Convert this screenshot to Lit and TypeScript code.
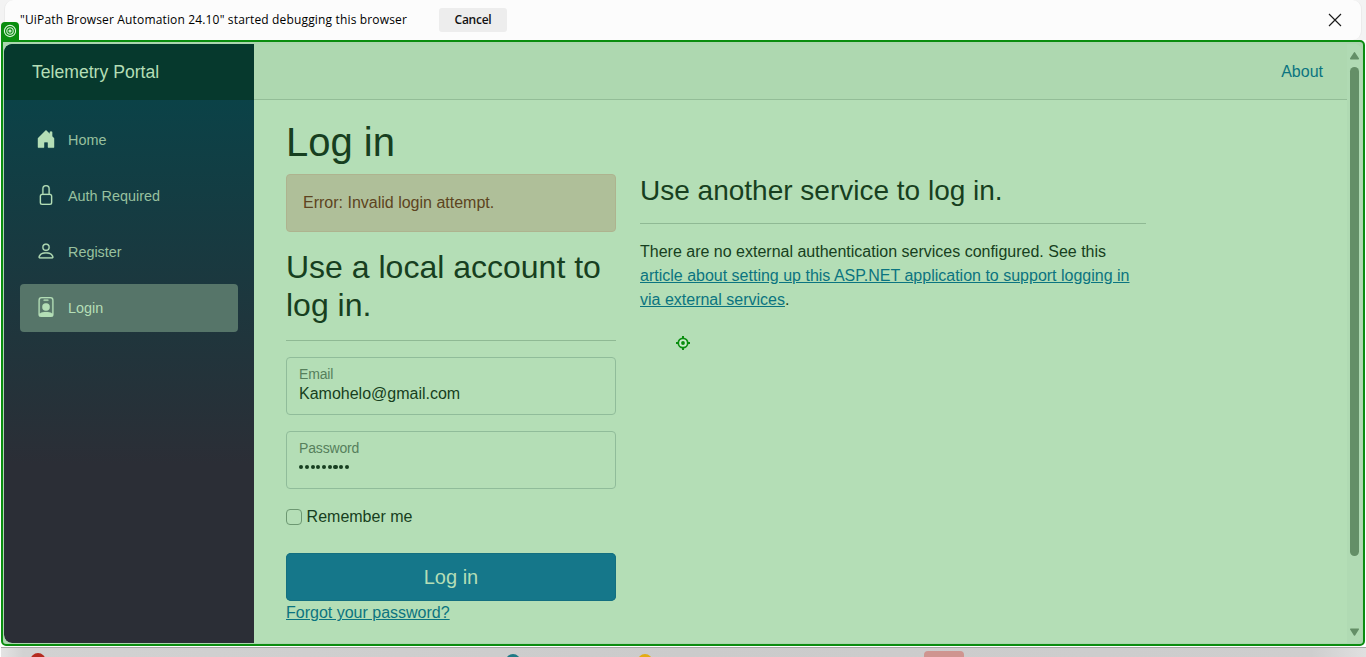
import { LitElement, html, css, svg } from "lit";
import { customElement } from "lit/decorators.js";

const ICONS = {
  home: svg`<path d="M6.5 14.5v-3.505c0-.245.25-.495.5-.495h2c.25 0 .5.25.5.5v3.5a.5.5 0 0 0 .5.5h4a.5.5 0 0 0 .5-.5v-7a.5.5 0 0 0-.146-.354L13 5.793V2.5a.5.5 0 0 0-.5-.5h-1a.5.5 0 0 0-.5.5v1.293L8.354 1.146a.5.5 0 0 0-.708 0l-6 6A.5.5 0 0 0 1.5 7.5v7a.5.5 0 0 0 .5.5h4a.5.5 0 0 0 .5-.5"/>`,
  lock: svg`<path d="M8 1a2 2 0 0 1 2 2v4H6V3a2 2 0 0 1 2-2m3 6V3a3 3 0 0 0-6 0v4a2 2 0 0 0-2 2v5a2 2 0 0 0 2 2h6a2 2 0 0 0 2-2V9a2 2 0 0 0-2-2M5 8h6a1 1 0 0 1 1 1v5a1 1 0 0 1-1 1H5a1 1 0 0 1-1-1V9a1 1 0 0 1 1-1"/>`,
  person: svg`<path d="M8 8a3 3 0 1 0 0-6 3 3 0 0 0 0 6m2-3a2 2 0 1 1-4 0 2 2 0 0 1 4 0m4 8c0 1-1 1-1 1H3s-1 0-1-1 1-4 6-4 6 3 6 4m-1-.004c-.001-.246-.154-.986-.832-1.664C11.516 10.68 10.289 10 8 10s-3.516.68-4.168 1.332c-.678.678-.83 1.418-.832 1.664z"/>`,
  badge: svg`<path d="M6.500 2a.5.5 0 0 0 0 1h3a.5.5 0 0 0 0-1zM11 8a3 3 0 1 1-6 0 3 3 0 0 1 6 0"/><path d="M4.500 0A2.500 2.500 0 0 0 2 2.500V14a2 2 0 0 0 2 2h8a2 2 0 0 0 2-2V2.500A2.500 2.500 0 0 0 11.500 0zM3 2.500A1.500 1.500 0 0 1 4.500 1h7A1.500 1.500 0 0 1 13 2.500v10.795a4.200 4.200 0 0 0-.776-.492C11.392 12.387 10.063 12 8 12s-3.392.387-4.224.803a4.200 4.200 0 0 0-.776.492z"/>`,
};

const NAV = [
  { label: "Home", icon: ICONS.home, active: false },
  { label: "Auth Required", icon: ICONS.lock, active: false },
  { label: "Register", icon: ICONS.person, active: false },
  { label: "Login", icon: ICONS.badge, active: true },
];

@customElement("debug-bar")
class DebugBar extends LitElement {
  static styles = css`
    :host { display: block; height: 40px; padding: 0 4px; background: #f3f3f3; box-sizing: border-box; }
    .bar { height: 40px; box-sizing: border-box; display: flex; align-items: center; background: #fcfcfc; border: 1px solid #ebebeb; border-top: 0; border-bottom: 0; border-radius: 9px 9px 9px 0; padding: 0 19px 0 15px; font-family: "Open Sans", sans-serif; font-size: 12px; color: #111; }
    .msg { width: 387px; white-space: nowrap; letter-spacing: 0.155px; padding-bottom: 1px; color: #000; }
    .cancel { margin-left: 32px; width: 68px; height: 24px; border: 0; border-radius: 3px; padding: 0 0 1px; background: #ededed; font: 600 12px "Open Sans", sans-serif; letter-spacing: -0.25px; color: #111; }
    .close { margin-left: auto; display: block; }
  `;
  render() {
    return html`<div class="bar">
      <span class="msg">"UiPath Browser Automation 24.10" started debugging this browser</span>
      <button class="cancel">Cancel</button>
      <svg class="close" width="14" height="14" viewBox="0 0 14 14"><path d="M1 1L13 13M13 1L1 13" stroke="#1b1b1b" stroke-width="1.15" fill="none" /></svg>
    </div>`;
  }
}

@customElement("side-nav")
class SideNav extends LitElement {
  static styles = css`
    :host { display: block; width: 250px; flex: none; background: linear-gradient(180deg, #06454a 0%, #2b2e36 70%); border-radius: 8px 0 0 8px; overflow: hidden; }
    .brand { height: 56px; box-sizing: border-box; padding-left: 28px; line-height: 57px; font-size: 17.6px; color: #b4deb6; background: #06392d; }
    .list { padding: 16px 16px 0; display: grid; gap: 8px; }
    .item { height: 48px; border-radius: 4px; display: flex; align-items: center; padding-left: 16px; font-size: 14.4px; color: #98c19f; }
    .active { background: #567569; color: #b4deb6; }
    .icon { width: 20px; height: 20px; margin: -2px 12px 0 0; fill: #b4deb6; stroke: #b4deb6; stroke-width: 0.15; flex: none; }
  `;
  render() {
    return html`<div class="brand">Telemetry Portal</div>
      <nav class="list">
        ${NAV.map((n) => html`<a class="item ${n.active ? "active" : ""}"><svg class="icon" viewBox="0 0 16 16">${n.icon}</svg>${n.label}</a>`)}
      </nav>`;
  }
}

@customElement("login-page")
class LoginPage extends LitElement {
  static styles = css`
    :host { display: block; flex: 1; min-width: 0; line-height: 24px; font-size: 16px; color: #173f20; }
    .top { height: 56px; box-sizing: border-box; display: flex; justify-content: flex-end; align-items: center; padding: 1px 24px 0 0; background: #aed8b0; border-bottom: 1px solid #93bd97; color: #0b7480; }
    .content { padding: 17.6px 24px 0 32px; }
    h1, h2, h3, p { margin: 0; font-weight: 400; line-height: 1.2; }
    h1 { font-size: 40px; margin-bottom: 8px; }
    h2 { font-size: 32px; }
    h3 { font-size: 28px; }
    .cols { display: flex; gap: 24px; align-items: flex-start; }
    .left { width: 330px; display: flex; flex-direction: column; }
    .right { width: 506px; }
    .alert { height: 58px; box-sizing: border-box; border: 1px solid #aeb38f; border-radius: 4px; background: #afbf99; color: #5d4420; padding: 16px; margin-bottom: 16px; }
    .rule { height: 1px; background: #8fb994; margin: 16px 0; }
    .field { height: 58px; box-sizing: border-box; border: 1px solid #90bc9a; border-radius: 4px; padding: 5px 12px; margin-bottom: 16px; }
    .label { font-size: 14px; line-height: 22px; letter-spacing: -0.16px; color: #56805c; }
    .value { line-height: 17px; }
    .dots { display: flex; gap: 1.6px; padding: 6px 0 0 0.3px; }
    .dot { width: 4.1px; height: 4.1px; border-radius: 50%; background: #173f20; }
    .check { display: flex; align-items: center; gap: 4.6px; height: 24px; }
    .box { width: 16px; height: 16px; box-sizing: border-box; border: 1px solid #6d9872; border-radius: 4px; }
    .btn { margin-top: 24px; height: 48px; border: 0; border-radius: 5px; background: #15778a; color: #b4deb6; font: 20px "Liberation Sans", Arial, sans-serif; box-shadow: inset 0 0 0 1px #136f80; }
    .link { color: #0b7480; text-decoration: underline; }
    p.note { line-height: 24px; }
  `;
  render() {
    return html`<header class="top"><a>About</a></header>
      <main class="content">
        <h1>Log in</h1>
        <div class="cols">
          <section class="left">
            <div class="alert">Error: Invalid login attempt.</div>
            <h2>Use a local account to log in.</h2>
            <div class="rule"></div>
            <div class="field"><div class="label">Email</div><div class="value">Kamohelo@gmail.com</div></div>
            <div class="field"><div class="label">Password</div><div class="dots">${Array.from({ length: 9 }, () => html`<span class="dot"></span>`)}</div></div>
            <label class="check"><span class="box"></span>Remember me</label>
            <button class="btn">Log in</button>
            <a class="link">Forgot your password?</a>
          </section>
          <section class="right">
            <h3>Use another service to log in.</h3>
            <div class="rule"></div>
            <p class="note">There are no external authentication services configured. See this <a class="link">article about setting up this ASP.NET application to support logging in via external services</a>.</p>
          </section>
        </div>
      </main>`;
  }
}

@customElement("app-root")
class AppRoot extends LitElement {
  static styles = css`
    :host { display: block; position: relative; width: 1366px; height: 657px; overflow: hidden; background: #fff; font-family: "Liberation Sans", Arial, sans-serif; }
    .frame { margin: 0 1px; height: 606px; box-sizing: border-box; border: 2px solid #0a8d0f; border-radius: 1px 5px 5px 5px; background: #acd6af; padding: 2px 1px 1px; display: flex; }
    .page { flex: 1; display: flex; background: #b4deb6; border-radius: 8px; overflow: hidden; }
    .scroll { width: 15px; flex: none; background: #b0dab3; display: flex; flex-direction: column; align-items: center; padding: 8px 0 7px; box-sizing: border-box; }
    .thumb { width: 9px; height: 489px; margin-top: 7px; border-radius: 5px; background: #648f67; }
    .arrow { width: 9px; height: 8px; fill: #648f67; display: block; flex: none; }
    .down { margin-top: auto; }
    .tag { position: absolute; left: 1px; top: 22px; width: 18px; height: 19px; border-radius: 4px 4px 0 0; background: #0a8d0f; }
    .tag svg { display: block; margin: 2px 0 0 2px; }
    .target { position: absolute; left: 675px; top: 335px; }
    .strip { margin: 1px 0 0 1px; height: 10px; box-sizing: border-box; border-top: 1px solid #a5a5a5; background: linear-gradient(90deg, #e4e4e4, #d2d2d2 22px, #cbcbcb 50%, #cecece 96%, #e0e0e0); overflow: hidden; display: block; }
  `;
  render() {
    return html`
      <debug-bar></debug-bar>
      <div class="frame">
        <div class="page">
          <side-nav></side-nav>
          <login-page></login-page>
          <div class="scroll">
            <svg class="arrow" viewBox="0 0 9 8"><path d="M4.500 .8 8.300 6.700H.7Z" stroke="#648f67" stroke-width="1.4" stroke-linejoin="round" /></svg>
            <div class="thumb"></div>
            <svg class="arrow down" viewBox="0 0 9 8"><path d="M4.500 7 8.300 1.100H.7Z" stroke="#648f67" stroke-width="1.4" stroke-linejoin="round" /></svg>
          </div>
        </div>
      </div>
      <svg class="strip" width="1365" height="10" viewBox="0 0 1365 9" preserveAspectRatio="none">
        <circle cx="37" cy="12.5" r="7.5" fill="#b52b20" />
        <circle cx="512" cy="13.5" r="7.5" fill="#1f7a86" />
        <circle cx="644" cy="13.5" r="7.5" fill="#e3ac12" />
        <rect x="923" y="3" width="40" height="14" rx="4" fill="#cf9590" />
      </svg>
      <div class="tag"><svg width="14" height="14" viewBox="0 0 14 14" fill="none" stroke="#d9f2da" stroke-width="1.1"><circle cx="7" cy="7" r="5.6" /><circle cx="7" cy="7" r="3.2" /><circle cx="7" cy="7" r="1" /></svg></div>
      <svg class="target" width="16" height="16" viewBox="0 0 16 16"><circle cx="8" cy="8" r="4.7" fill="#c9eccb" stroke="#0a8d0f" stroke-width="1.7" /><circle cx="8" cy="8" r="1.9" fill="#0a8d0f" /><path d="M8 1v2.500M8 12.500v2.500M1 8h2.500M12.500 8h2.500" stroke="#0a8d0f" stroke-width="2" /></svg>
    `;
  }
}
